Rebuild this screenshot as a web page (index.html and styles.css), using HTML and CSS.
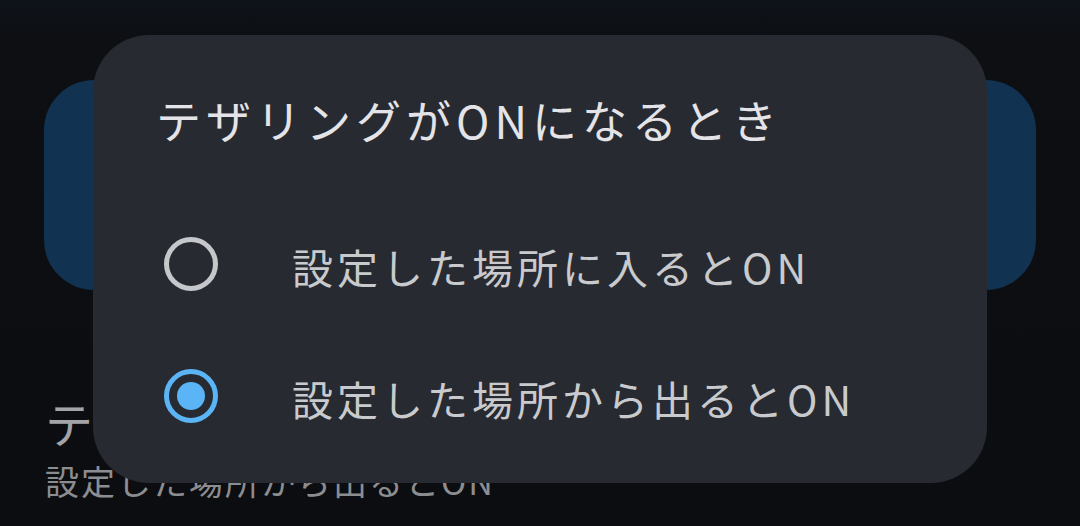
FILE: index.html
```html
<!DOCTYPE html>
<html lang="ja">
<head>
<meta charset="utf-8">
<link rel="stylesheet" href="styles.css">
</head>
<body>
<div class="screen">
  <div class="behind">
    <div class="blue-card"></div>
    <div class="setting">
      <div class="setting-title">テザリングがONになるとき</div>
      <div class="setting-sub">設定した場所から出るとON</div>
    </div>
  </div>
  <div class="dialog">
    <div class="dialog-title">テザリングがONになるとき</div>
    <div class="options">
      <div class="option">
        <span class="radio"></span>
        <span class="option-label">設定した場所に入るとON</span>
      </div>
      <div class="option">
        <span class="radio checked"></span>
        <span class="option-label">設定した場所から出るとON</span>
      </div>
    </div>
  </div>
</div>
</body>
</html>
```

FILE: styles.css
```css
* { box-sizing: border-box; }
html, body {
  margin: 0;
  padding: 0;
  width: 1080px;
  height: 526px;
  overflow: hidden;
}
body {
  background: linear-gradient(to bottom, #0e1219 0px, #0d0f13 40px, #0c0d10 100%);
  font-family: "Noto Sans CJK JP", sans-serif;
}
.screen {
  position: relative;
  width: 1080px;
  height: 526px;
}
.behind {
  padding: 80px 44px 0 44px;
  display: flex;
  flex-direction: column;
}
.blue-card {
  height: 210px;
  border-radius: 50px;
  background: #113250;
}
.setting {
  margin-top: 102px;
  padding-left: 1px;
  display: flex;
  flex-direction: column;
}
.setting-title {
  font-size: 48px;
  line-height: 60px;
  color: #a3a4a8;
  letter-spacing: 4px;
  white-space: nowrap;
}
.setting-sub {
  margin-top: 7px;
  font-size: 34px;
  line-height: 44px;
  color: #8c8d91;
  letter-spacing: 2px;
  white-space: nowrap;
}
.dialog {
  position: absolute;
  left: 93px;
  top: 35px;
  width: 894px;
  height: 448px;
  border-radius: 56px;
  background: #272a31;
  padding: 55px 0 0 71px;
  display: flex;
  flex-direction: column;
}
.dialog-title {
  margin-left: -8px;
  font-size: 45px;
  line-height: 60px;
  color: #e4e4e8;
  letter-spacing: 5px;
  white-space: nowrap;
}
.options {
  margin-top: 48px;
  display: flex;
  flex-direction: column;
}
.option {
  height: 132px;
  display: flex;
  align-items: center;
  gap: 74px;
}
.radio {
  flex: none;
  width: 54px;
  height: 54px;
  border-radius: 50%;
  border: 5px solid #c6c7cb;
  display: flex;
  align-items: center;
  justify-content: center;
}
.radio.checked {
  border-color: #5ab4f6;
}
.radio.checked::after {
  content: "";
  width: 28px;
  height: 28px;
  border-radius: 50%;
  background: #5ab4f6;
}
.option-label {
  font-size: 41px;
  line-height: 56px;
  color: #c9cacd;
  letter-spacing: 4px;
  white-space: nowrap;
  padding-top: 4px;
}
```
